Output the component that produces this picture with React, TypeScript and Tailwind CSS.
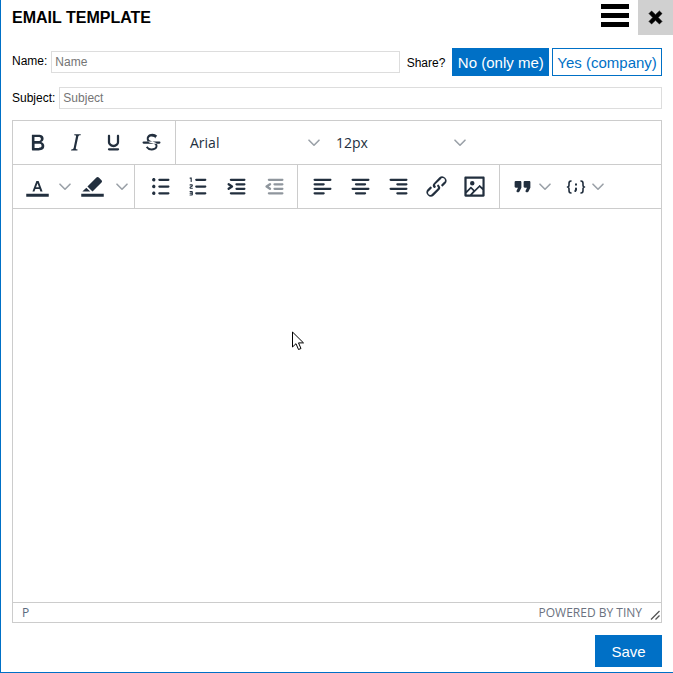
const P: Record<string, string> = {
  bold: "M7.8 19c-.3 0-.5 0-.6-.2l-.2-.5V5.7c0-.2 0-.4.2-.5l.6-.2h5c1.5 0 2.7.3 3.5 1 .7.6 1.1 1.4 1.1 2.5a3 3 0 01-.6 1.9c-.4.6-1 1-1.6 1.2.4.1.9.3 1.3.6s.8.7 1 1.2c.4.4.5 1 .5 1.6 0 1.3-.4 2.3-1.3 3-.8.7-2.1 1-3.8 1H7.8zm5-8.3c.6 0 1.2-.1 1.6-.5.4-.3.6-.7.6-1.3 0-1.1-.8-1.7-2.3-1.7H9.3v3.5h3.4zm.5 6c.7 0 1.3-.1 1.7-.4.4-.4.6-.9.6-1.5s-.2-1-.7-1.4c-.4-.3-1-.4-2-.4H9.4v3.8h4z",
  italic: "M16.7 4.7l-.1.9h-.3c-.6 0-1 0-1.4.3-.3.3-.4.6-.5 1.1l-2.1 9.8v.6c0 .5.4.8 1.4.8h.2l-.2.8H8l.2-.8h.2c1.1 0 1.8-.5 2-1.5l2-9.8.1-.5c0-.6-.4-.8-1.4-.8h-.3l.2-.9h5.8z",
  underline: "M16 5c.6 0 1 .4 1 1v5.5a4 4 0 01-.4 1.8l-1 1.4a5.3 5.3 0 01-5.5 1 5 5 0 01-1.6-1c-.5-.4-.8-.9-1.1-1.4a4 4 0 01-.4-1.8V6c0-.6.4-1 1-1s1 .4 1 1v5.5c0 .3 0 .6.2 1l.6.7a3.3 3.3 0 002.2.8 3.4 3.4 0 002.2-.8c.3-.2.5-.4.6-.7.2-.4.2-.7.2-1V6c0-.6.4-1 1-1zM8 17h8c.6 0 1 .4 1 1s-.4 1-1 1H8a1 1 0 010-2z",
  strike: "M15.6 8.5c-.5-.7-1-1.1-1.3-1.3-.6-.4-1.3-.6-2-.6-2.7 0-2.8 1.7-2.8 2.1 0 1.6 1.8 2 3.2 2.3 4.4.9 4.6 2.8 4.6 3.9 0 1.4-.7 4.1-5 4.1A6.2 6.2 0 017 16.4l1.5-1.1c.4.6 1.6 2 3.7 2 1.6 0 2.5-.4 3-1 .3-.4.4-.9.4-1.3 0-.8-.4-2-4-2.6-3-.5-3.8-2.3-3.8-3.8 0-1.6 1.2-4.3 5-4.3a6 6 0 014.3 1.8l-1.5 1.4zM5 11h14a1 1 0 010 2H5a1 1 0 010-2z",
  bullist: "M11 5h8c.6 0 1 .4 1 1s-.4 1-1 1h-8a1 1 0 010-2zm0 6h8c.6 0 1 .4 1 1s-.4 1-1 1h-8a1 1 0 010-2zm0 6h8c.6 0 1 .4 1 1s-.4 1-1 1h-8a1 1 0 010-2zM4.5 6c0-.4.1-.8.4-1 .3-.4.7-.5 1.1-.5.4 0 .8.1 1 .4.4.3.5.7.5 1.1 0 .4-.1.8-.4 1-.3.4-.7.5-1.1.5-.4 0-.8-.1-1-.4-.4-.3-.5-.7-.5-1.1zm0 6c0-.4.1-.8.4-1 .3-.4.7-.5 1.1-.5.4 0 .8.1 1 .4.4.3.5.7.5 1.1 0 .4-.1.8-.4 1-.3.4-.7.5-1.1.5-.4 0-.8-.1-1-.4-.4-.3-.5-.7-.5-1.1zm0 6c0-.4.1-.8.4-1 .3-.4.7-.5 1.1-.5.4 0 .8.1 1 .4.4.3.5.7.5 1.1 0 .4-.1.8-.4 1-.3.4-.7.5-1.1.5-.4 0-.8-.1-1-.4-.4-.3-.5-.7-.5-1.1z",
  numlist: "M10 17h8c.6 0 1 .4 1 1s-.4 1-1 1h-8a1 1 0 010-2zm0-6h8c.6 0 1 .4 1 1s-.4 1-1 1h-8a1 1 0 010-2zm0-6h8c.6 0 1 .4 1 1s-.4 1-1 1h-8a1 1 0 110-2zM6 4v3.5c0 .3-.2.5-.5.5a.5.5 0 01-.5-.5V5h-.5a.5.5 0 010-1H6zm-1 8.8l.2.2h1.3c.3 0 .5.2.5.5s-.2.5-.5.5H4.9a1 1 0 01-.9-1V13c0-.4.3-.8.6-1l1.2-.4.2-.3a.2.2 0 00-.2-.2H4.5a.5.5 0 01-.5-.5c0-.3.2-.5.5-.5h1.6c.5 0 .9.4.9 1v.1c0 .4-.3.8-.6 1l-1.2.4-.2.3zM7 17v2c0 .6-.4 1-1 1H4.5a.5.5 0 010-1h1.2c.2 0 .3-.1.3-.3 0-.2-.1-.3-.3-.3H4.4a.4.4 0 110-.8h1.3c.2 0 .3-.1.3-.3 0-.2-.1-.3-.3-.3H4.5a.5.5 0 110-1H6c.6 0 1 .4 1 1z",
  indent: "M7 5h12c.6 0 1 .4 1 1s-.4 1-1 1H7a1 1 0 110-2zm5 4h7c.6 0 1 .4 1 1s-.4 1-1 1h-7a1 1 0 010-2zm0 4h7c.6 0 1 .4 1 1s-.4 1-1 1h-7a1 1 0 010-2zm-5 4h12a1 1 0 010 2H7a1 1 0 010-2zm-2.6-3.8L6.2 12l-1.8-1.2a1 1 0 011.2-1.6l3 2a1 1 0 010 1.6l-3 2a1 1 0 11-1.2-1.6z",
  outdent: "M7 5h12c.6 0 1 .4 1 1s-.4 1-1 1H7a1 1 0 110-2zm5 4h7c.6 0 1 .4 1 1s-.4 1-1 1h-7a1 1 0 010-2zm0 4h7c.6 0 1 .4 1 1s-.4 1-1 1h-7a1 1 0 010-2zm-5 4h12a1 1 0 010 2H7a1 1 0 010-2zm1.6-3.8a1 1 0 01-1.2 1.6l-3-2a1 1 0 010-1.6l3-2a1 1 0 011.2 1.6L6.8 12l1.8 1.2z",
  left: "M5 5h14c.6 0 1 .4 1 1s-.4 1-1 1H5a1 1 0 110-2zm0 4h8c.6 0 1 .4 1 1s-.4 1-1 1H5a1 1 0 110-2zm0 8h8c.6 0 1 .4 1 1s-.4 1-1 1H5a1 1 0 010-2zm0-4h14c.6 0 1 .4 1 1s-.4 1-1 1H5a1 1 0 010-2z",
  center: "M5 5h14c.6 0 1 .4 1 1s-.4 1-1 1H5a1 1 0 110-2zm3 4h8c.6 0 1 .4 1 1s-.4 1-1 1H8a1 1 0 110-2zm0 8h8c.6 0 1 .4 1 1s-.4 1-1 1H8a1 1 0 010-2zm-3-4h14c.6 0 1 .4 1 1s-.4 1-1 1H5a1 1 0 010-2z",
  right: "M5 5h14c.6 0 1 .4 1 1s-.4 1-1 1H5a1 1 0 110-2zm6 4h8c.6 0 1 .4 1 1s-.4 1-1 1h-8a1 1 0 010-2zm0 8h8c.6 0 1 .4 1 1s-.4 1-1 1h-8a1 1 0 010-2zm-6-4h14c.6 0 1 .4 1 1s-.4 1-1 1H5a1 1 0 010-2z",
  link: "M6.2 12.3a1 1 0 011.4 1.4l-2 2a2 2 0 102.6 2.8l4.8-4.8a1 1 0 000-1.4 1 1 0 111.4-1.3 2.9 2.9 0 010 4L9.6 20a3.9 3.9 0 01-5.5-5.5l2-2zm11.6-.6a1 1 0 01-1.4-1.4l2-2a2 2 0 10-2.6-2.8L11 10a1 1 0 000 1.4A1 1 0 119.6 13a2.9 2.9 0 010-4L14.4 4a3.9 3.9 0 015.5 5.5l-2 2z",
  image: "M5 15.7l3.3-3.2c.3-.3.7-.3 1 0L12 15l4.1-4c.3-.4.8-.4 1 0l2 1.9V5H5v10.7zM5 18V19h3l2.8-2.9-2-2L5 17.9zm14-3l-2.5-2.4-6.4 6.5H19v-4zM4 3h16c.6 0 1 .4 1 1v16c0 .6-.4 1-1 1H4a1 1 0 01-1-1V4c0-.6.4-1 1-1zm6 8a2 2 0 100-4 2 2 0 000 4z",
  quote: "M7.5 17h.9c.4 0 .7-.2.9-.6L11 13V8c0-.6-.4-1-1-1H6a1 1 0 00-1 1v4c0 .6.4 1 1 1h2l-1.3 2.7a1 1 0 00.8 1.3zm8 0h.9c.4 0 .7-.2.9-.6L19 13V8c0-.6-.4-1-1-1h-4a1 1 0 00-1 1v4c0 .6.4 1 1 1h2l-1.3 2.7a1 1 0 00.8 1.3z",
  textColor: "M2 18.5h20V21H2zM7.5 16.5L11 7h2l3.5 9.5h-1.9l-.8-2.3h-3.7l-.8 2.3zm3.2-3.9h2.6L12 9z",
  marker: "M2 18.5h20V21H2zM3 16.5l3.5-3.5 3.5 3.5zM7.5 12l8-8c.6-.6 1.5-.6 2.1 0l2.4 2.4c.6.6.6 1.5 0 2.1l-8 8z",
};

function Icon({ name, muted = false, size = 27 }: { name: string; muted?: boolean; size?: number }) {
  return (
    <svg width={size} height={size} viewBox="0 0 24 24" className={muted ? "fill-[#222f3e] opacity-50" : "fill-[#222f3e]"}>
      <path d={P[name]} fillRule="evenodd" />
    </svg>
  );
}

function Btn({ name, muted }: { name: string; muted?: boolean }) {
  return (
    <div className="w-[38px] h-[43px] flex items-center justify-center shrink-0">
      <Icon name={name} muted={muted} />
    </div>
  );
}

function Chevron() {
  return (
    <svg width="12" height="8" viewBox="0 0 12 8" className="shrink-0">
      <path d="M1 1.2l5 5 5-5" fill="none" stroke="#222f3e" strokeOpacity="0.45" strokeWidth="1.6" strokeLinecap="round" strokeLinejoin="round" />
    </svg>
  );
}

function Select({ label }: { label: string }) {
  return (
    <div className="w-[146px] h-[43px] pl-[14px] pr-[2px] flex items-center justify-between shrink-0">
      <span className="text-[14px] text-[#222f3e] font-['Open_Sans',sans-serif] leading-none pt-px">{label}</span>
      <Chevron />
    </div>
  );
}

export default function App() {
  return (
    <div className="w-[673px] h-[673px] bg-white border-l border-b border-[#0070c6] font-['Liberation_Sans',Arial,sans-serif] text-black relative overflow-hidden">
      <header className="h-[35px] flex items-center">
        <h1 className="ml-[11px] text-[16px] font-bold leading-none flex-1">EMAIL TEMPLATE</h1>
        <svg width="28" height="24" viewBox="0 0 28 24" className="mr-[9px] mb-[3px]">
          <path d="M0 0h28v5H0zM0 9h28v5H0zM0 18h28v5H0z" fill="#000" />
        </svg>
        <button className="w-[35px] h-[35px] bg-[#d0d0d0] flex items-center justify-center">
          <svg width="15" height="15" viewBox="0 0 15 15">
            <path d="M1 3.6L3.6 1l3.9 3.7L11.400 1 14 3.600l-3.800 3.900 3.800 3.900-2.600 2.600-3.900-3.800-3.900 3.800L1 11.400l3.800-3.900z" fill="#000" stroke="#000" strokeWidth="0.6" strokeLinejoin="round" />
          </svg>
        </button>
      </header>

      <div className="px-[11px]">
        <div className="mt-[13px] h-[28px] flex items-center">
          <label className="text-[12px] leading-none mr-[4px] mb-[3px]">Name:</label>
          <input readOnly placeholder="Name" className="w-[349px] h-[22px] border border-[#dddddd] px-[3px] text-[12px] placeholder:text-[#757575] outline-none" />
          <span className="ml-[7px] text-[12px] leading-none mt-[2px]">Share?</span>
          <button className="ml-[7px] w-[97px] h-[28px] bg-[#0070c6] text-white text-[15px] leading-none">No (only me)</button>
          <button className="ml-[3px] w-[110px] h-[28px] bg-white border border-[#0070c6] text-[#0070c6] text-[15px] leading-none">Yes (company)</button>
        </div>

        <div className="mt-[11px] h-[22px] flex items-center">
          <label className="text-[12px] leading-none mr-[4px]">Subject:</label>
          <input readOnly placeholder="Subject" className="flex-1 min-w-0 h-[22px] border border-[#dddddd] px-[3px] text-[12px] placeholder:text-[#757575] outline-none" />
        </div>

        <div className="mt-[11px] h-[503px] border border-[#cccccc] flex flex-col">
          <div className="h-[44px] border-b border-[#cccccc] flex shrink-0">
            <div className="w-[163px] pl-[5px] border-r border-[#cccccc] flex">
              <Btn name="bold" />
              <Btn name="italic" />
              <Btn name="underline" />
              <Btn name="strike" />
            </div>
            <Select label="Arial" />
            <Select label="12px" />
          </div>

          <div className="h-[44px] border-b border-[#cccccc] flex shrink-0">
            <div className="w-[122px] pl-[5px] border-r border-[#cccccc] flex items-center">
              <Btn name="textColor" />
              <div className="w-[17px] flex justify-center"><Chevron /></div>
              <Btn name="marker" />
              <div className="w-[21px] flex justify-center"><Chevron /></div>
            </div>
            <div className="w-[163px] pl-[6px] border-r border-[#cccccc] flex">
              <Btn name="bullist" />
              <Btn name="numlist" />
              <Btn name="indent" />
              <Btn name="outdent" muted />
            </div>
            <div className="w-[202px] pl-[5px] border-r border-[#cccccc] flex">
              <Btn name="left" />
              <Btn name="center" />
              <Btn name="right" />
              <Btn name="link" />
              <Btn name="image" />
            </div>
            <div className="flex-1 flex items-center pl-[7px]">
              <div className="w-[30px] flex justify-center"><Icon name="quote" /></div>
              <div className="w-[15px] flex justify-center"><Chevron /></div>
              <div className="ml-[9px] w-[30px] flex justify-center">
                <svg width="20" height="16" viewBox="0 0 20 16" fill="none" stroke="#222f3e" strokeWidth="1.6" strokeLinecap="round" strokeLinejoin="round">
                  <path d="M5 2c-2 0-2 1-2 2.500V6c0 1-.5 2-1.500 2 1 0 1.500 1 1.500 2v1.500C3 13 3 14 5 14" />
                  <path d="M15 2c2 0 2 1 2 2.500V6c0 1 .5 2 1.500 2-1 0-1.500 1-1.500 2v1.500c0 1.500 0 2.500-2 2.500" />
                  <path d="M10 5.200v.6M10 9.500v1.200l-.7 1.300" strokeWidth="2" />
                </svg>
              </div>
              <div className="w-[14px] flex justify-center"><Chevron /></div>
            </div>
          </div>

          <div className="flex-1 bg-white" />

          <div className="h-[20px] border-t border-[#cccccc] pl-[9px] pr-[1px] flex items-center justify-between shrink-0 font-['Open_Sans',sans-serif] text-[12px] leading-none text-[#5b6a7e]">
            <span>P</span>
            <div className="flex items-center">
              <span className="text-[#6b7280]">POWERED BY TINY</span>
              <svg width="10" height="10" viewBox="0 0 10 10" className="ml-[8px] mt-[4px]">
                <path d="M1 9.500L9.500 1M5.500 9.500L9.500 5.500" stroke="#555" strokeWidth="1.300" fill="none" />
              </svg>
            </div>
          </div>
        </div>

        <div className="mt-[12px] flex justify-end">
          <button className="w-[67px] h-[32px] bg-[#0070c6] text-white text-[15px] leading-none">Save</button>
        </div>
      </div>

      <svg width="14" height="20" viewBox="0 0 14 20" className="absolute left-[290px] top-[331px]">
        <path d="M1.500 1v15l3.500-3.300 2.500 5.800 2.500-1-2.500-5.600h5z" fill="#fff" stroke="#000" strokeWidth="1" strokeLinejoin="miter" />
      </svg>
    </div>
  );
}
